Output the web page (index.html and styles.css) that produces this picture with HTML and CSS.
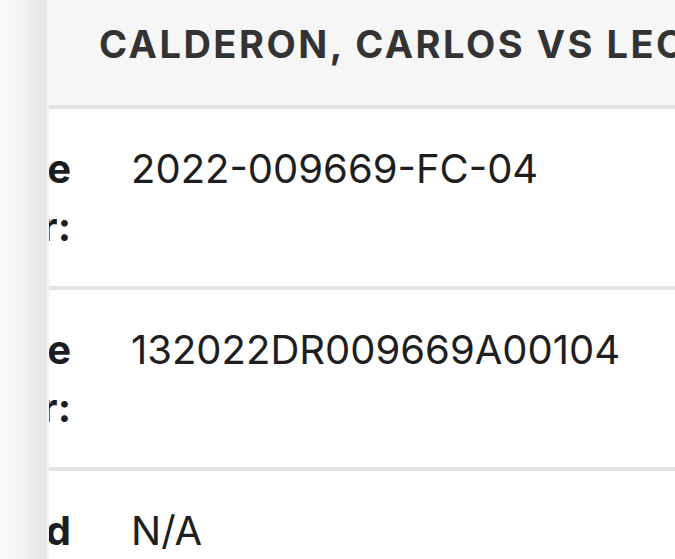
FILE: index.html
```html
<!DOCTYPE html>
<html lang="en">
<head>
<meta charset="utf-8">
<title>Case detail</title>
<link rel="stylesheet" href="styles.css">
</head>
<body>
<div class="page">
  <div class="table">
    <div class="head">CALDERON, CARLOS VS LEON, MARIA</div>
    <div class="row">
      <div class="label">Case Number:</div>
      <div class="value">2022-009669-FC-04</div>
    </div>
    <div class="row">
      <div class="label">State Case Number:</div>
      <div class="value">132022DR009669A00104</div>
    </div>
    <div class="row">
      <div class="label">Date Filed</div>
      <div class="value">N/A</div>
    </div>
  </div>
  <div class="sidebar"></div>
</div>
</body>
</html>
```
FILE: styles.css
```css
html, body {
  margin: 0;
  padding: 0;
  background: #ffffff;
  overflow: hidden;
}
.page {
  position: relative;
  width: 675px;
  height: 559px;
  overflow: hidden;
  font-family: Inter, "Liberation Sans", sans-serif;
}
.table {
  margin-left: -169px;
  width: 1400px;
}
.head {
  height: 109px;
  box-sizing: border-box;
  padding: 22px 0 0 268px;
  background: #f6f6f6;
  border-bottom: 4px solid #e1e2e6;
  font-size: 38px;
  font-weight: 700;
  letter-spacing: 2.5px;
  color: #333333;
  white-space: nowrap;
  line-height: 44px;
}
.row {
  display: grid;
  grid-template-columns: 240px 1fr;
  column-gap: 60px;
  padding: 31px 0 30px;
  border-bottom: 4px solid #e2e3e7;
  font-size: 40px;
  line-height: 58px;
  min-height: 116px;
}
.label {
  text-align: right;
  font-weight: 700;
  color: #1d1d1f;
}
.value {
  color: #1e1e20;
  white-space: nowrap;
}
.sidebar {
  position: absolute;
  left: 0;
  top: 0;
  width: 47px;
  height: 100%;
  background: linear-gradient(to right, #fafafa 0%, #f1f1f1 55%, #e6e6e6 100%);
  border-right: 2px solid #f3f3f4;
}
```
